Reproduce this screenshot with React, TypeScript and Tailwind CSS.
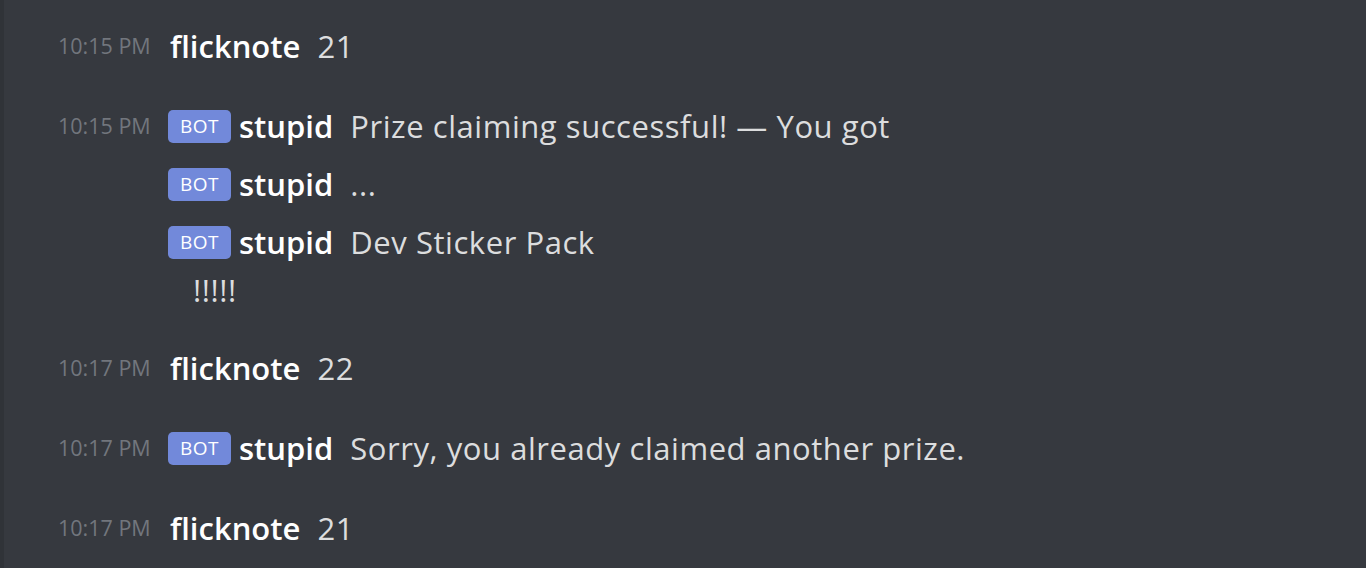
import React from "react"

type Line = { text: string; cont?: string }

interface Message {
  time: string
  author: string
  bot?: boolean
  lines: Line[]
}

const messages: Message[] = [
  { time: "10:15 PM", author: "flicknote", lines: [{ text: "21" }] },
  {
    time: "10:15 PM",
    author: "stupid",
    bot: true,
    lines: [
      { text: "Prize claiming successful! — You got" },
      { text: "..." },
      { text: "Dev Sticker Pack", cont: "!!!!!" },
    ],
  },
  { time: "10:17 PM", author: "flicknote", lines: [{ text: "22" }] },
  { time: "10:17 PM", author: "stupid", bot: true, lines: [{ text: "Sorry, you already claimed another prize." }] },
  { time: "10:17 PM", author: "flicknote", lines: [{ text: "21" }] },
]

function BotTag() {
  return (
    <span className="inline-flex items-center justify-center h-[33px] w-[63px] rounded-[5px] bg-[#7289da] text-white text-[19px] tracking-[0.5px] font-medium leading-none mr-[8px] shrink-0">
      BOT
    </span>
  )
}

export default function App() {
  return (
    <div
      className="h-screen w-full bg-[#36393f] flex overflow-hidden"
      style={{ fontFamily: "'Open Sans', Lato, sans-serif" }}
    >
      <div className="w-[4px] bg-[#303338] shrink-0" />
      <div className="flex-1 pt-[17px]">
        {messages.map((m, i) => (
          <div key={i} className={i > 0 ? "mt-[22px]" : ""}>
            {m.lines.map((line, j) => (
              <div key={j} className="py-[4px]">
                <div className="flex items-center h-[50px]">
                  <span className="pl-[54px] w-[164px] shrink-0 text-[21.5px] text-[#72767d]">
                    {j === 0 ? m.time : ""}
                  </span>
                  {m.bot && <BotTag />}
                  <span className={`text-[31px] font-semibold text-white ${m.bot ? "" : "ml-[2px]"}`}>{m.author}</span>
                  <span className="ml-[17px] text-[31px] tracking-[0.55px] text-[#dcddde] whitespace-nowrap">
                    {line.text}
                  </span>
                </div>
                {line.cont && (
                  <div className="h-[46px] flex items-center pl-[189px] text-[31px] tracking-[0.55px] text-[#dcddde]">
                    {line.cont}
                  </div>
                )}
              </div>
            ))}
          </div>
        ))}
      </div>
    </div>
  )
}
